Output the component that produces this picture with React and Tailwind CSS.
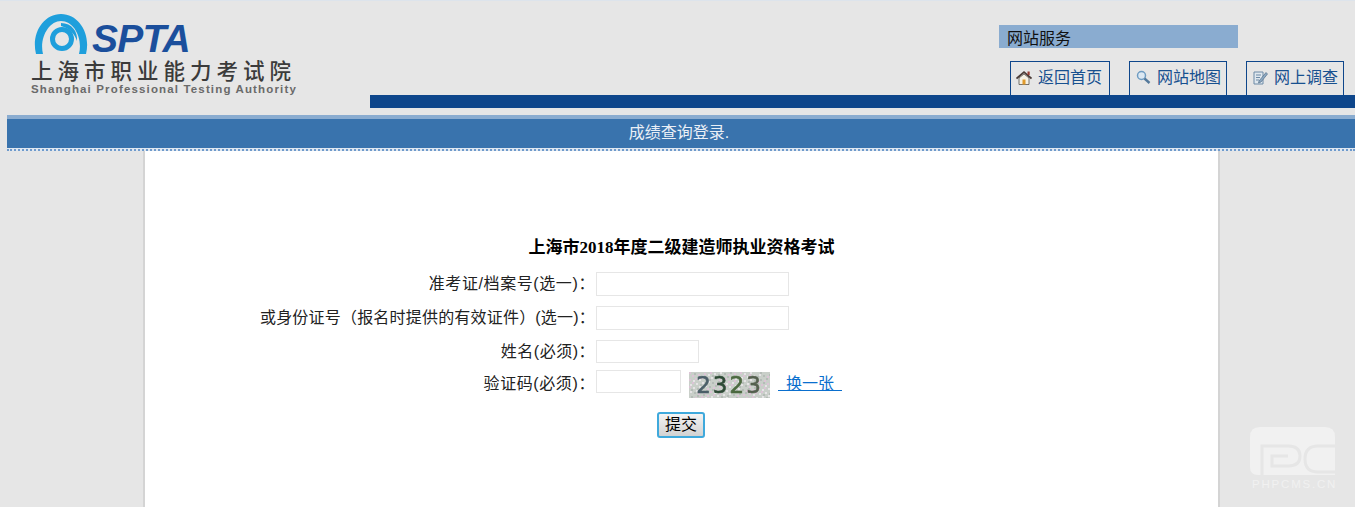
const CJK = "font-['Liberation_Sans','Noto_Sans_CJK_SC',sans-serif]"

const NAV = [
  { label: '返回首页', icon: 'home', width: 'w-[100px]', gap: 'ml-[11px]' },
  { label: '网站地图', icon: 'search', width: 'w-[98px]', gap: 'ml-[19px]' },
  { label: '网上调查', icon: 'note', width: 'w-[98px]', gap: 'ml-[19px]' },
]

const ROWS = [
  { label: '准考证/档案号(选一)：', input: 'w-[193px] h-[24px]', row: 'mt-[14px]', text: 'tracking-[0.6px] leading-[24px]' },
  { label: '或身份证号（报名时提供的有效证件）(选一)：', input: 'w-[193px] h-[24px]', row: 'mt-[10px]', text: 'tracking-[0.2px] leading-[24px]' },
  { label: '姓名(必须)：', input: 'w-[103px] h-[23px]', row: 'mt-[10px]', text: 'tracking-[0.5px] leading-[23px]' },
]

const CAPTCHA_DIGITS = [
  { n: '2', color: 'text-[#4b5f68]' },
  { n: '3', color: 'text-[#2e4a36]' },
  { n: '2', color: 'text-[#4c6a40]' },
  { n: '3', color: 'text-[#55604f]' },
]

function NavIcon({ type }) {
  if (type === 'home') {
    return (
      <svg width="16" height="14" viewBox="0 0 16 14">
        <path d="M3 7v6.500h10V7L8 3z" fill="#f6f1e4" stroke="#57534e" strokeWidth="0.8" />
        <path d="M0.500 7.500 8 1.200l7.500 6.300" fill="none" stroke="#4a3b36" strokeWidth="1.700" />
        <rect x="11.500" y="0.500" width="2.200" height="3.500" fill="#9a3f34" />
        <rect x="6.500" y="8.500" width="3" height="5" fill="#e09a2b" />
      </svg>
    )
  }
  if (type === 'search') {
    return (
      <svg width="15" height="15" viewBox="0 0 15 15">
        <circle cx="5.500" cy="5.500" r="4" fill="#dce8f2" stroke="#6f9cc2" strokeWidth="1.500" />
        <path d="M8.500 8.500 13.500 13" stroke="#54799b" strokeWidth="2.400" />
      </svg>
    )
  }
  return (
    <svg width="15" height="15" viewBox="0 0 15 15">
      <path d="M1 2h9v12H1z" fill="#dfe7ee" stroke="#6d8aa6" />
      <path d="M3 5h5M3 7.500h4M3 10h3" stroke="#6d8aa6" />
      <path d="M6 11 13 2.500l1.500 1.500L8 12l-2.500 1z" fill="#8da9c2" stroke="#55708a" strokeWidth="0.7" />
    </svg>
  )
}

function Logo() {
  return (
    <div className="w-[265px] ml-[31px] pt-[13px]">
      <div className="flex items-end h-[40px] ml-[3px]">
        <svg width="54" height="40" viewBox="0 0 54 40" className="shrink-0">
          <path d="M2 40C-3 20 9 0 27 0C45 0 57 20 52 40L45 40C49 24 40 7 27 7C15 7 5 24 9 40Z" fill="#1e9fdc" />
          <circle cx="28" cy="25" r="9.500" fill="none" stroke="#1e9fdc" strokeWidth="5" />
          <path d="M27 9C38 9 44 18 43 27C41 20 35 14 27 12Z" fill="#1e9fdc" />
        </svg>
        <span className="ml-[4px] text-[39px] leading-[30px] font-bold italic text-[#1b4f9c] tracking-[-0.800px] font-['Liberation_Sans',sans-serif]">SPTA</span>
      </div>
      <div className="mt-[5px] text-[21.500px] leading-[22px] font-medium tracking-[5px] text-[#3b3b3b] whitespace-nowrap font-['Noto_Sans_CJK_SC',sans-serif]">上海市职业能力考试院</div>
      <div className="mt-[2px] text-[11.500px] leading-[12px] font-bold text-[#6a6a6a] whitespace-nowrap tracking-[1.150px] font-['Liberation_Sans',sans-serif]">Shanghai Professional Testing Authority</div>
    </div>
  )
}

function Captcha() {
  return (
    <div className="relative ml-[8px] mt-[2px] w-[81px] h-[26px] overflow-hidden bg-[#c9cfc9] flex items-center justify-center">
      <svg width="81" height="26" viewBox="0 0 81 26" className="absolute inset-0">
        {Array.from({ length: 170 }).map((_, i) => (
          <rect
            key={i}
            x={(i * 37) % 81}
            y={(i * 11) % 26}
            width="2"
            height="2"
            fill={i % 3 === 0 ? '#dcc4d6' : i % 3 === 1 ? '#e6e4e6' : '#b5bcb7'}
          />
        ))}
      </svg>
      <span className="relative flex gap-[2px] pr-[2px] text-[23px] leading-[26px] font-['DejaVu_Sans',sans-serif] blur-[0.4px] [-webkit-text-stroke:0.6px_currentColor]">
        {CAPTCHA_DIGITS.map((d, i) => (
          <span key={i} className={d.color}>{d.n}</span>
        ))}
      </span>
    </div>
  )
}

function Watermark() {
  return (
    <div className="absolute left-[1250px] top-[427px] w-[88px] text-[#f1f1f1]">
      <svg width="85" height="48" viewBox="0 0 85 48">
        <path d="M0 10Q0 0 10 0H75Q85 0 85 10V48H8Q0 48 0 40Z" fill="#f1f1f1" />
        <path d="M12 48V19H38Q50 19 50 29Q50 39 38 39H22V29H38" fill="none" stroke="#e6e6e6" strokeWidth="3" />
        <path d="M85 19H68Q55 19 55 32Q55 45 68 45H85" fill="none" stroke="#e6e6e6" strokeWidth="3" />
      </svg>
      <div className="pl-[2px] text-[11.500px] leading-[12px] mt-[3px] tracking-[1.800px] whitespace-nowrap font-['Liberation_Sans',sans-serif]">PHPCMS.CN</div>
    </div>
  )
}

export default function App() {
  return (
    <div className={`relative h-[507px] overflow-hidden bg-[#e6e6e6] ${CJK}`}>
      {/* header */}
      <div className="h-[115px] border-t border-[#dde4ec] flex justify-between">
        <Logo />
        <div className="w-[985px] flex flex-col">
          <div className="h-[94px] flex flex-col items-start pl-[629px] pt-[24px]">
            <div className="w-[239px] h-[23px] bg-[#8aacd0] pl-[8px] text-[16px] leading-[28px] text-[#111]">网站服务</div>
            <div className="flex mt-[13px]">
              {NAV.map(item => (
                <div
                  key={item.label}
                  className={`${item.width} ${item.gap} h-[34px] border border-[#0e468b] border-b-0 flex items-center pl-[5px] pb-[2px] text-[16px] text-[#17508f] whitespace-nowrap`}
                >
                  <span className="w-[16px] flex justify-center"><NavIcon type={item.icon} /></span>
                  <span className="ml-[6px]">{item.label}</span>
                </div>
              ))}
            </div>
          </div>
          <div className="h-[13px] bg-[#0e468b]" />
        </div>
      </div>

      {/* title bar */}
      <div className="ml-[7px]">
        <div className="h-[4px] bg-[#8aacd0]" />
        <div className="h-[29px] bg-[#3973ad] text-center pr-[4px] text-[16px] leading-[27px] text-[#e9eff6]">成绩查询登录.</div>
        <div className="h-[3px] border-b-2 border-dotted border-[#6f9acb] bg-[#dfe7f0]" />
      </div>

      {/* form panel */}
      <div className="ml-[143px] w-[1077px] h-[360px] bg-white border-x-2 border-[#d4d4d4]">
        <h1 className="pt-[87px] text-center text-[17px] leading-[20px] font-bold text-black font-['Liberation_Serif','Noto_Sans_CJK_SC',serif]">上海市2018年度二级建造师执业资格考试</h1>

        {ROWS.map(row => (
          <div key={row.label} className={`flex items-center ${row.row}`}>
            <label className={`w-[451px] pr-[1px] text-right text-[16px] text-[#222] whitespace-nowrap ${row.text}`}>{row.label}</label>
            <div className={`${row.input} border border-[#e6e6e6] bg-white`} />
          </div>
        ))}

        <div className="flex items-start mt-[7px]">
          <label className="w-[451px] pr-[1px] pt-[2px] text-right text-[16px] leading-[24px] tracking-[0.6px] text-[#222]">验证码(必须)：</label>
          <div className="w-[85px] h-[23px] border border-[#e6e6e6] bg-white" />
          <Captcha />
          <a className="ml-[8px] px-[8px] pt-[4px] text-[16px] leading-[20px] h-[21px] text-[#0a6fce] border-b border-[#0a6fce]">换一张</a>
        </div>

        <div className="flex justify-center mt-[14px] pr-[1px]">
          <button className="w-[48px] h-[26px] rounded-[3px] border-2 border-[#3fa9dc] bg-gradient-to-b from-[#f4f4f4] to-[#d2d2d2] text-[16px] leading-[20px] text-black">提交</button>
        </div>
      </div>

      <Watermark />
    </div>
  )
}
